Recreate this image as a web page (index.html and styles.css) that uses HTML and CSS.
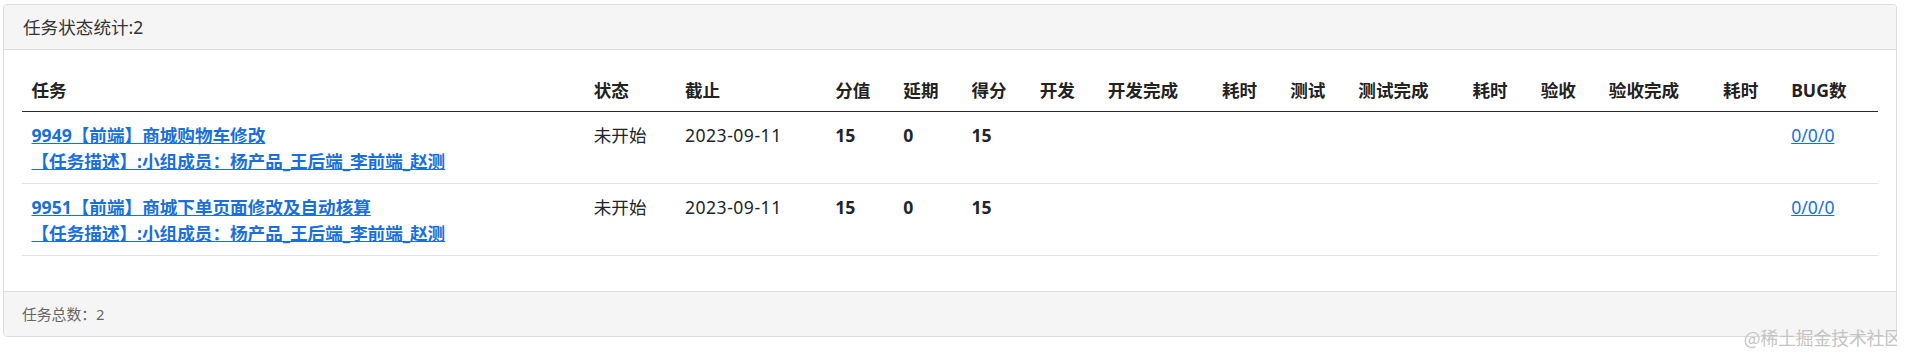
FILE: index.html
```html
<!DOCTYPE html>
<html lang="zh-CN">
<head>
<meta charset="utf-8">
<title>任务状态统计</title>
<link rel="stylesheet" href="styles.css">
</head>
<body>
<div class="panel">
  <div class="panel-heading">任务状态统计:2</div>
  <div class="panel-body">
    <table class="task-table">
      <colgroup>
        <col class="c-task">
        <col class="c-status">
        <col class="c-date">
        <col class="c-sm"><col class="c-sm"><col class="c-sm"><col class="c-sm">
        <col class="c-lg">
        <col class="c-sm"><col class="c-sm">
        <col class="c-lg">
        <col class="c-sm"><col class="c-sm">
        <col class="c-lg">
        <col class="c-sm">
        <col class="c-bug">
      </colgroup>
      <thead>
        <tr>
          <th>任务</th><th>状态</th><th>截止</th><th>分值</th><th>延期</th><th>得分</th><th>开发</th><th>开发完成</th><th>耗时</th><th>测试</th><th>测试完成</th><th>耗时</th><th>验收</th><th>验收完成</th><th>耗时</th><th>BUG数</th>
        </tr>
      </thead>
      <tbody>
        <tr>
          <td><a class="task-link" href="#">9949【前端】商城购物车修改<br>【任务描述】:小组成员：杨产品_王后端_李前端_赵测</a></td>
          <td>未开始</td><td class="date">2023-09-11</td><td class="num">15</td><td class="num">0</td><td class="num">15</td>
          <td></td><td></td><td></td><td></td><td></td><td></td><td></td><td></td><td></td>
          <td><a class="bug-link" href="#">0/0/0</a></td>
        </tr>
        <tr>
          <td><a class="task-link" href="#">9951【前端】商城下单页面修改及自动核算<br>【任务描述】:小组成员：杨产品_王后端_李前端_赵测</a></td>
          <td>未开始</td><td class="date">2023-09-11</td><td class="num">15</td><td class="num">0</td><td class="num">15</td>
          <td></td><td></td><td></td><td></td><td></td><td></td><td></td><td></td><td></td>
          <td><a class="bug-link" href="#">0/0/0</a></td>
        </tr>
      </tbody>
    </table>
  </div>
  <div class="panel-footer">任务总数：2</div>
</div>
<div class="watermark">@稀土掘金技术社区</div>
</body>
</html>
```
FILE: styles.css
```css
html, body {
  background: #fff;
}
body {
  margin: 4px 12px 0 3px;
  min-height: 349px;
  position: relative;
  font-family: "Noto Sans", "Noto Sans CJK SC", sans-serif;
  font-size: 17.6px;
  color: #212529;
}
.panel {
  border: 1px solid #ddd;
  border-radius: 4px;
  background: #fff;
}
.panel-heading {
  background: #f5f5f5;
  border-bottom: 1px solid #ddd;
  border-radius: 3px 3px 0 0;
  padding: 10px 19px;
  line-height: 24px;
  color: #333;
}
.panel-body {
  padding: 18px;
}
.task-table {
  width: 100%;
  table-layout: fixed;
  border-collapse: collapse;
  margin-bottom: 17px;
}
.c-task { width: 561px; }
.c-status { width: 91px; }
.c-date { width: 150px; }
.c-sm { width: 68px; }
.c-lg { width: 114px; }
.c-bug { width: 96px; }
.task-table th {
  text-align: left;
  font-weight: 700;
  color: #222;
  padding: 9.5px;
  line-height: 24px;
  border-bottom: 1px solid #2b2b2b;
  white-space: nowrap;
  vertical-align: bottom;
}
.task-table td {
  padding: 9.5px;
  line-height: 26px;
  vertical-align: top;
  border-bottom: 1px solid #e2e2e2;
  white-space: nowrap;
}
.task-table td.num {
  font-weight: 700;
}
.task-table td.date {
  letter-spacing: 0.5px;
}
.task-link {
  color: #1a6fdc;
  font-weight: 700;
  text-decoration: underline;
}
.bug-link {
  color: #1a6fdc;
  text-decoration: underline;
}
.panel-footer {
  background: #f5f5f5;
  border-top: 1px solid #ddd;
  border-radius: 0 0 3px 3px;
  padding: 10px 18px;
  line-height: 24px;
  font-size: 14.8px;
  color: #666;
}
.watermark {
  position: absolute;
  right: -5px;
  top: 322px;
  font-family: "Noto Sans CJK SC", sans-serif;
  font-size: 17.7px;
  line-height: 22px;
  color: #c4c4c4;
  white-space: nowrap;
}
```
